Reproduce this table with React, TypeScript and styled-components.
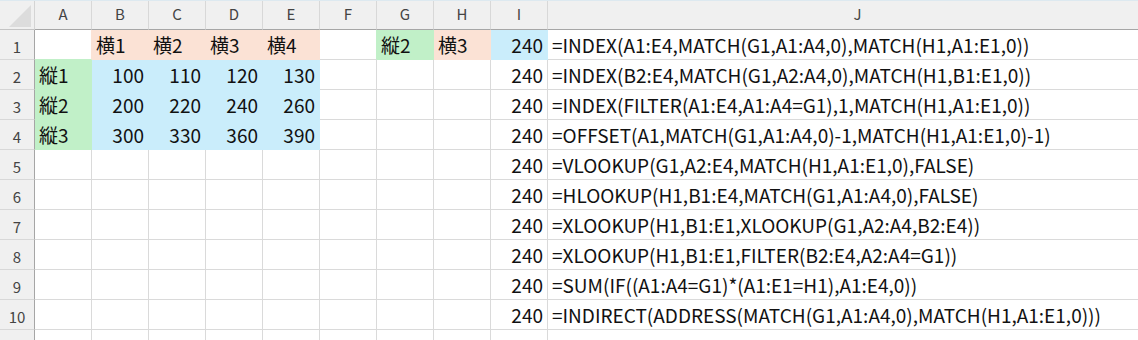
import styled, { createGlobalStyle } from "styled-components";

const PEACH = "#fbe2d5";
const GREEN = "#c1f0c8";
const BLUE = "#caedfb";
const GRID = "#dadada";

const GlobalStyle = createGlobalStyle`
  html, body {
    margin: 0;
    padding: 0;
    background: #ffffff;
  }
  body {
    width: 1138px;
    height: 340px;
    overflow: hidden;
  }
`;

const Sheet = styled.div`
  display: grid;
  grid-template-columns: 35px repeat(9, 57px) 620px;
  grid-template-rows: 29px;
  grid-auto-rows: 30px;
  width: max-content;
  border-top: 1px solid #dde9f0;
  font-family: "Noto Sans CJK JP", "Noto Sans", sans-serif;
  color: #111111;
`;

const Corner = styled.div`
  box-sizing: border-box;
  background: #f0f0f0;
  border-right: 1px solid #d4d4d4;
  border-bottom: 1px solid #c4c4c4;
`;

const ColHeader = styled.div`
  box-sizing: border-box;
  display: flex;
  justify-content: center;
  align-items: flex-start;
  padding-top: 4px;
  background: #f0f0f0;
  border-right: 1px solid #d8d8d8;
  border-bottom: 1px solid #a6a6a6;
  font-size: 15px;
  line-height: 18px;
  color: #444444;
`;

const RowHeader = styled.div`
  box-sizing: border-box;
  display: flex;
  justify-content: center;
  align-items: center;
  padding-top: 3px;
  background: #f0f0f0;
  border-right: 1px solid #a6a6a6;
  border-bottom: 1px solid #d8d8d8;
  font-size: 15px;
  color: #444444;
`;

const Cell = styled.div<{
  $fill?: string;
  $right: string;
  $bottom: string;
  $align: "left" | "right";
}>`
  box-sizing: border-box;
  display: flex;
  align-items: flex-end;
  justify-content: ${(p) => (p.$align === "right" ? "flex-end" : "flex-start")};
  padding: 0 4px 4px;
  background: ${(p) => p.$fill ?? "#ffffff"};
  border-right: 1px solid ${(p) => p.$right};
  border-bottom: 1px solid ${(p) => p.$bottom};
  font-size: 19px;
  line-height: 20px;
  white-space: nowrap;
`;

type CellData = { text: string; fill?: string; align?: "left" | "right" };

const COLS = ["A", "B", "C", "D", "E", "F", "G", "H", "I", "J"];

const formulas = [
  "=INDEX(A1:E4,MATCH(G1,A1:A4,0),MATCH(H1,A1:E1,0))",
  "=INDEX(B2:E4,MATCH(G1,A2:A4,0),MATCH(H1,B1:E1,0))",
  "=INDEX(FILTER(A1:E4,A1:A4=G1),1,MATCH(H1,A1:E1,0))",
  "=OFFSET(A1,MATCH(G1,A1:A4,0)-1,MATCH(H1,A1:E1,0)-1)",
  "=VLOOKUP(G1,A2:E4,MATCH(H1,A1:E1,0),FALSE)",
  "=HLOOKUP(H1,B1:E4,MATCH(G1,A1:A4,0),FALSE)",
  "=XLOOKUP(H1,B1:E1,XLOOKUP(G1,A2:A4,B2:E4))",
  "=XLOOKUP(H1,B1:E1,FILTER(B2:E4,A2:A4=G1))",
  "=SUM(IF((A1:A4=G1)*(A1:E1=H1),A1:E4,0))",
  "=INDIRECT(ADDRESS(MATCH(G1,A1:A4,0),MATCH(H1,A1:E1,0)))",
];

const table: number[][] = [
  [100, 110, 120, 130],
  [200, 220, 240, 260],
  [300, 330, 360, 390],
];

function buildRows(): CellData[][] {
  const rows: CellData[][] = [];
  for (let r = 0; r < 11; r++) {
    const row: CellData[] = COLS.map(() => ({ text: "" }));
    if (r === 0) {
      ["横1", "横2", "横3", "横4"].forEach((t, i) => {
        row[i + 1] = { text: t, fill: PEACH };
      });
      row[6] = { text: "縦2", fill: GREEN };
      row[7] = { text: "横3", fill: PEACH };
      row[8] = { text: "240", fill: BLUE, align: "right" };
    } else if (r <= 3) {
      row[0] = { text: `縦${r}`, fill: GREEN };
      table[r - 1].forEach((v, i) => {
        row[i + 1] = { text: String(v), fill: BLUE, align: "right" };
      });
    }
    if (r > 0 && r < 10) row[8] = { text: "240", align: "right" };
    if (r < 10) row[9] = { ...row[9], text: formulas[r] };
    rows.push(row);
  }
  return rows;
}

const rows = buildRows();

function edgeColor(own?: string, other?: string) {
  return own ?? other ?? GRID;
}

function CornerMark() {
  return (
    <svg width="34" height="28" viewBox="0 0 34 28">
      <polygon points="9,26 31,26 31,4" fill="#dcdcdc" />
    </svg>
  );
}

export default function App() {
  return (
    <>
      <GlobalStyle />
      <Sheet>
        <Corner>
          <CornerMark />
        </Corner>
        {COLS.map((c) => (
          <ColHeader key={c}>{c}</ColHeader>
        ))}
        {rows.map((row, r) => [
          // the last row is only partly in view, so its number is left out
          <RowHeader key={`h${r}`}>{r < 10 ? r + 1 : ""}</RowHeader>,
          ...row.map((cell, c) => (
            <Cell
              key={`${r}-${c}`}
              $fill={cell.fill}
              $align={cell.align ?? "left"}
              $right={edgeColor(cell.fill, row[c + 1]?.fill)}
              $bottom={edgeColor(cell.fill, rows[r + 1]?.[c].fill)}
            >
              {cell.text}
            </Cell>
          )),
        ])}
      </Sheet>
    </>
  );
}
